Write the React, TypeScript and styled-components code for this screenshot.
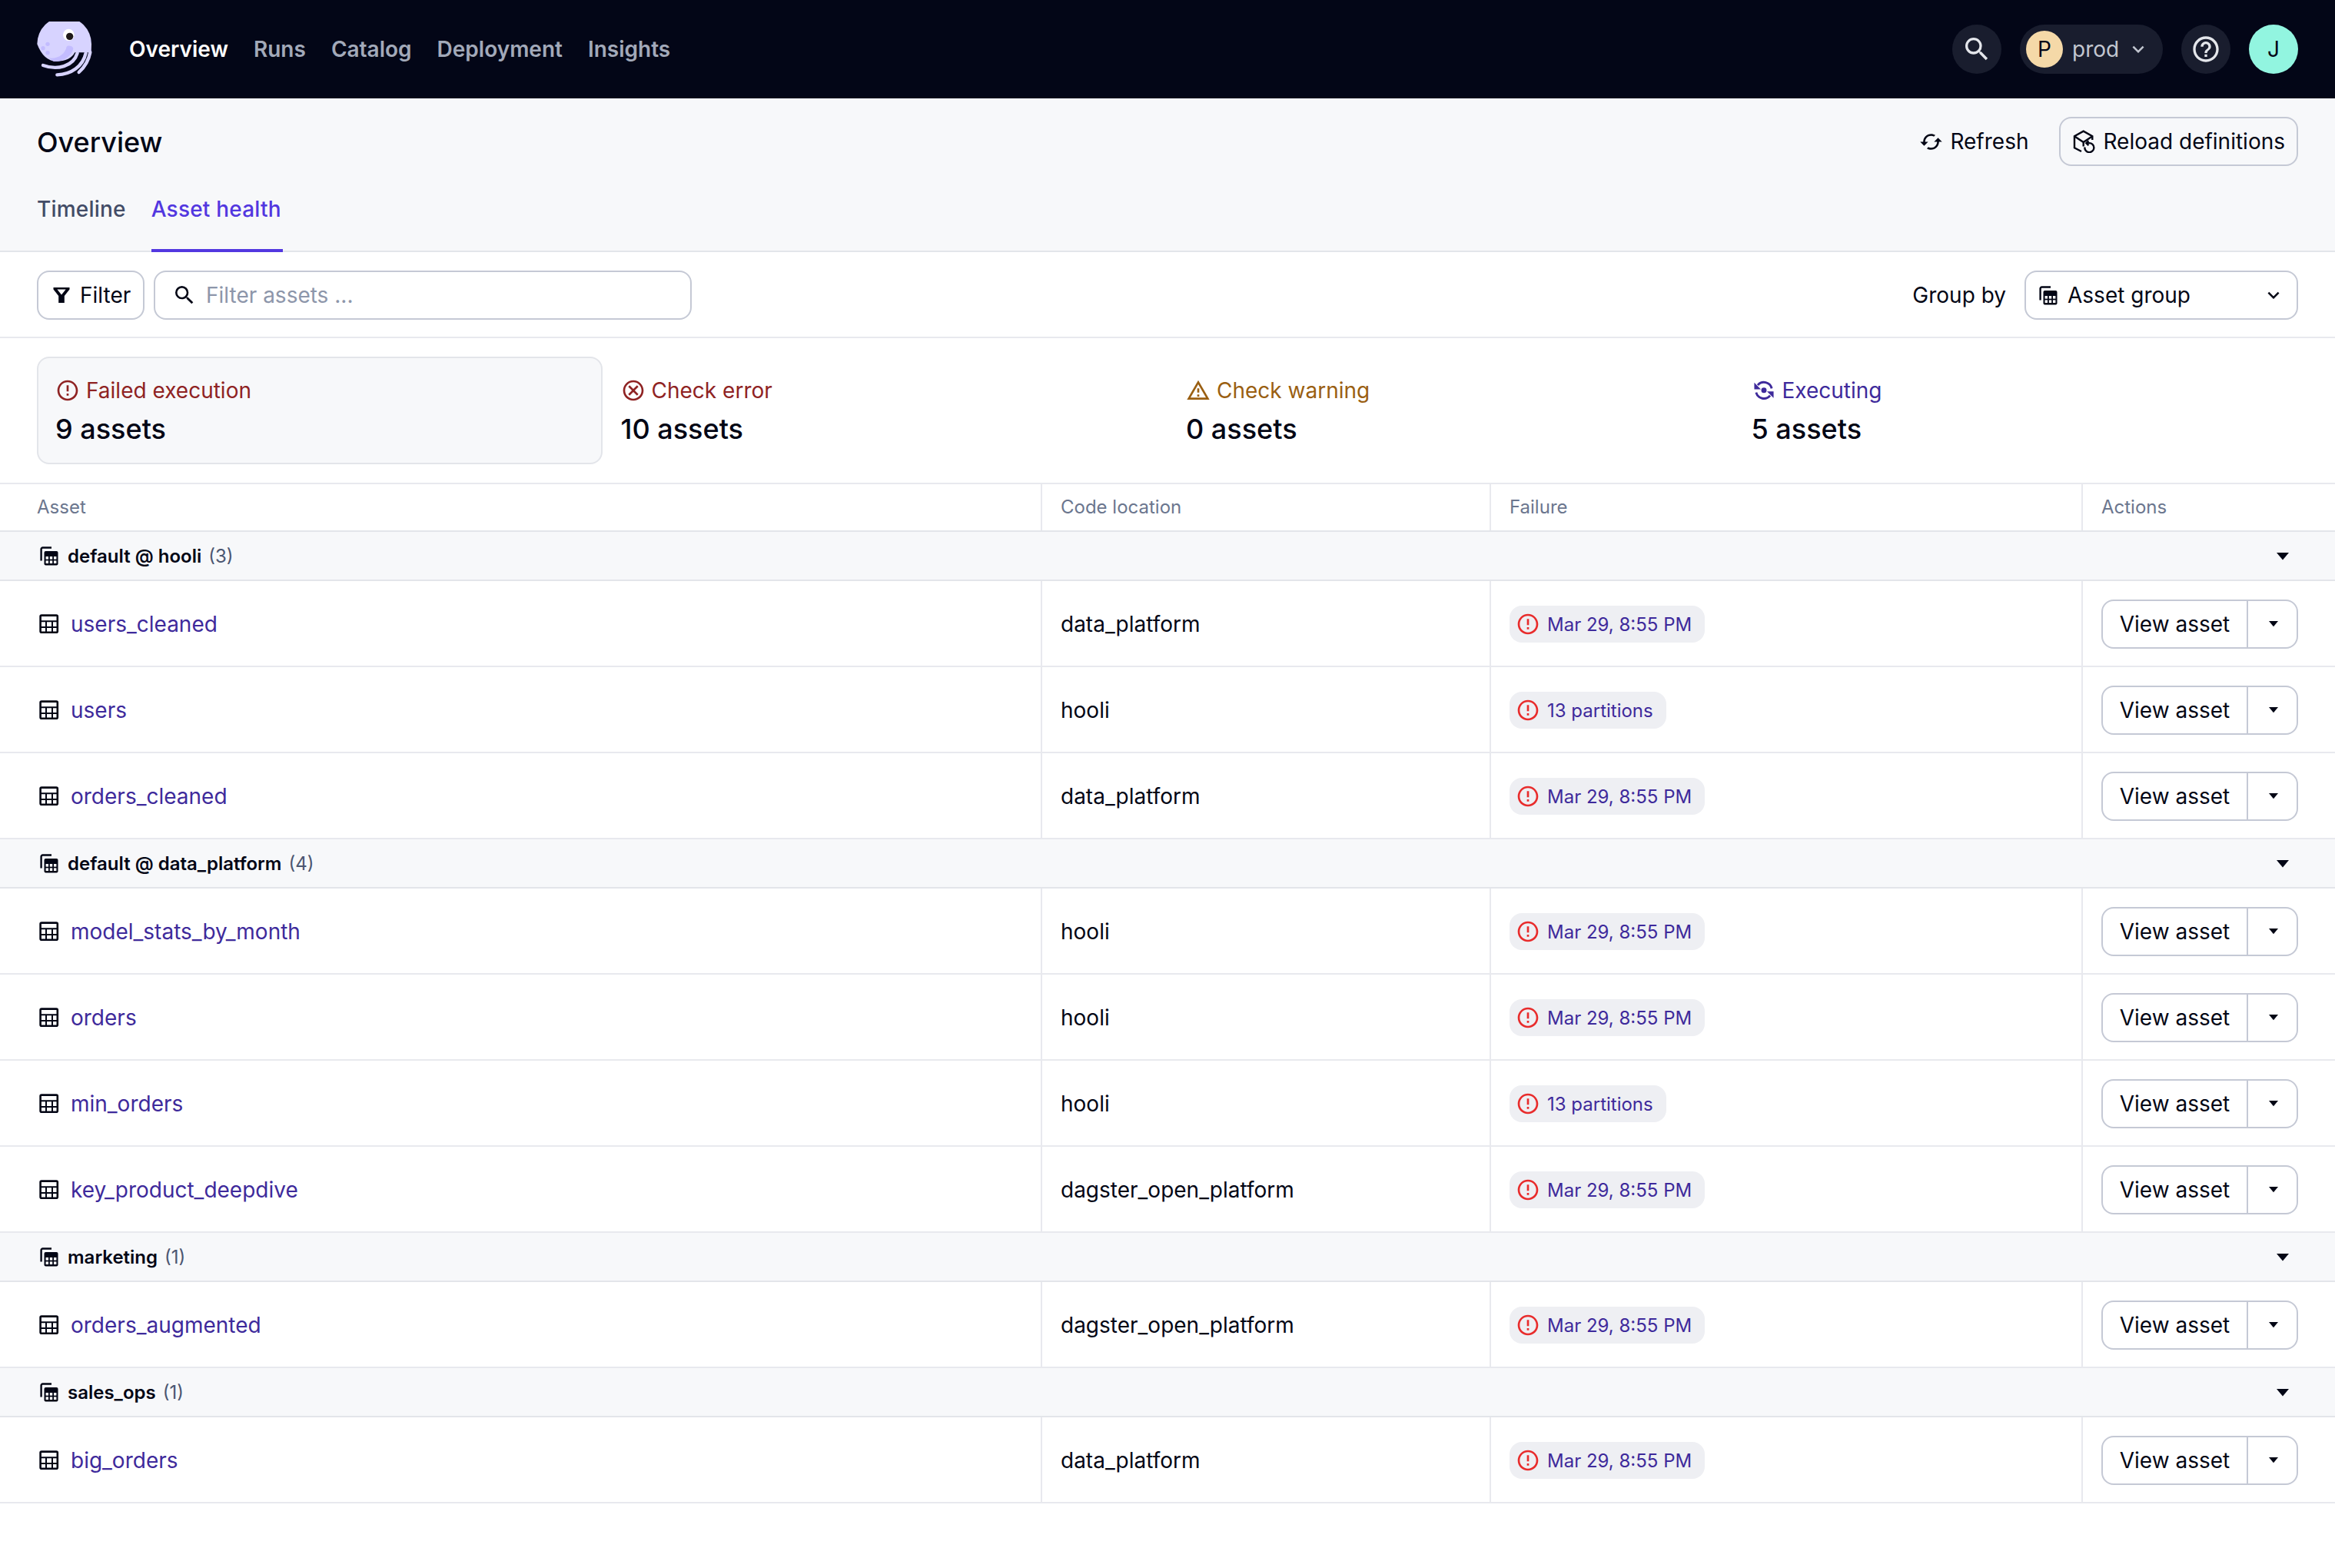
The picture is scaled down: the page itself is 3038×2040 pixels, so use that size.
import { ReactNode } from 'react'
import styled, { createGlobalStyle } from 'styled-components'

const GlobalStyle = createGlobalStyle`
  html, body {
    margin: 0;
    padding: 0;
    background: #fff;
    font-family: Inter, "Liberation Sans", sans-serif;
    color: #030615;
  }
  * {
    box-sizing: border-box;
  }
`

const Page = styled.div`
  width: 3038px;
  min-height: 2040px;
  background: #fff;
`

const TopNav = styled.header`
  height: 128px;
  background: #030617;
  display: flex;
  align-items: center;
  padding: 0 48px;
`
const NavLinks = styled.nav`
  display: flex;
  gap: 33px;
  margin-left: 48px;
`
const NavLink = styled.a<{ $active?: boolean }>`
  font-size: 28px;
  font-weight: 600;
  line-height: 40px;
  color: ${(p) => (p.$active ? '#fff' : '#a2a9b9')};
`
const NavRight = styled.div`
  margin-left: auto;
  display: flex;
  align-items: center;
  gap: 24px;
`
const RoundButton = styled.div`
  width: 64px;
  height: 64px;
  border-radius: 50%;
  background: #191d2e;
  color: #e4e6eb;
  display: flex;
  align-items: center;
  justify-content: center;
`
const DeploymentPill = styled.div`
  width: 186px;
  height: 64px;
  border-radius: 32px;
  background: #191d2e;
  display: flex;
  align-items: center;
  padding-left: 8px;
  color: #c2c6d0;
  font-size: 28px;
`
const PillLetter = styled.span`
  width: 48px;
  height: 48px;
  border-radius: 50%;
  background: #f5d9a8;
  color: #030617;
  display: flex;
  align-items: center;
  justify-content: center;
  margin-right: 12px;
`
const PillChevron = styled.span`
  display: flex;
  margin-left: 10px;
`
const Avatar = styled(RoundButton)`
  background: #92f5e0;
  color: #030617;
  font-size: 28px;
`

const PageHeader = styled.section`
  height: 200px;
  background: #f7f8fa;
  border-bottom: 2px solid #e3e5ea;
  padding: 24px 48px 0;
`
const TitleRow = styled.div`
  display: flex;
  align-items: center;
  justify-content: space-between;
  height: 64px;
`
const Title = styled.h1`
  margin: 0;
  padding-top: 2px;
  font-size: 36px;
  font-weight: 500;
`
const TitleActions = styled.div`
  display: flex;
  align-items: center;
  gap: 40px;
`
const RefreshLink = styled.div`
  display: flex;
  align-items: center;
  gap: 9px;
  font-size: 28px;
`
const OutlineButton = styled.div`
  height: 64px;
  border: 2px solid #c5c9d5;
  border-radius: 16px;
  display: flex;
  align-items: center;
  gap: 10px;
  font-size: 28px;
  padding: 0 15px;
`
const Tabs = styled.div`
  display: flex;
  gap: 31px;
`
const Tab = styled.div<{ $active?: boolean }>`
  height: 112px;
  padding: 4px 2px 0 0;
  display: flex;
  align-items: center;
  font-size: 28px;
  font-weight: 500;
  letter-spacing: 0.2px;
  color: ${(p) => (p.$active ? '#5237e0' : '#434c66')};
  border-bottom: 4px solid ${(p) => (p.$active ? '#5237e0' : 'transparent')};
`

const FilterBar = styled.section`
  height: 112px;
  border-bottom: 2px solid #e8e9ee;
  padding: 24px 48px 0;
  display: flex;
  align-items: flex-start;
  gap: 12px;
`
const FilterButton = styled(OutlineButton)`
  width: 140px;
  padding: 0 0 0 18px;
  gap: 12px;
  background: #fff;
`
const SearchBox = styled.div`
  width: 700px;
  height: 64px;
  border: 2px solid #c5c9d5;
  border-radius: 16px;
  display: flex;
  align-items: center;
  gap: 12px;
  padding-left: 22px;
  font-size: 28px;
  color: #8d96aa;
`
const GroupBy = styled.div`
  margin-left: auto;
  height: 64px;
  display: flex;
  align-items: center;
  gap: 24px;
  font-size: 28px;
`
const GroupSelect = styled(OutlineButton)`
  width: 356px;
  gap: 13px;
  padding: 0 15px 0 15px;
`
const SelectChevron = styled.span`
  margin-left: auto;
  display: flex;
`

const Summary = styled.section`
  height: 190px;
  border-bottom: 2px solid #e8e9ee;
  padding: 24px 48px;
  display: grid;
  grid-template-columns: repeat(4, 1fr);
`
const SummaryCard = styled.div<{ $selected?: boolean }>`
  height: 140px;
  border: 2px solid ${(p) => (p.$selected ? '#e3e5ea' : 'transparent')};
  border-radius: 16px;
  background: ${(p) => (p.$selected ? '#f7f8fa' : 'transparent')};
  padding: 22px 22px;
`
const SummaryLabel = styled.div<{ $color: string }>`
  display: flex;
  align-items: center;
  gap: 8px;
  color: ${(p) => p.$color};
  font-size: 28px;
  line-height: 40px;
`
const SummaryCount = styled.div`
  font-size: 36px;
  font-weight: 500;
  line-height: 48px;
  margin-top: 6px;
`

const COLUMNS = '1354px 584px 770px 330px'

const TableHead = styled.div`
  display: grid;
  grid-template-columns: ${COLUMNS};
  height: 62px;
  border-bottom: 2px solid #e3e5ea;
`
const HeadCell = styled.div`
  display: flex;
  align-items: center;
  padding: 0 0 2px 24px;
  font-size: 24px;
  color: #6b768e;
  border-left: 2px solid #e8e9ee;
  &:first-child {
    border-left: none;
    padding-left: 48px;
  }
`
const GroupRow = styled.div`
  height: 64px;
  background: #f7f8fa;
  border-bottom: 2px solid #e3e5ea;
  display: flex;
  align-items: center;
  padding: 0 60px 0 50px;
`
const GroupName = styled.span`
  margin-left: 12px;
  font-size: 24px;
  font-weight: 600;
`
const GroupCount = styled.span`
  margin-left: 9px;
  font-size: 24px;
  color: #4b5671;
`
const GroupCaret = styled.span`
  margin: 2px 0 0 auto;
  display: flex;
`
const AssetRow = styled.div`
  display: grid;
  grid-template-columns: ${COLUMNS};
  height: 112px;
  border-bottom: 2px solid #e8e9ee;
`
const Cell = styled.div`
  display: flex;
  align-items: center;
  padding: 2px 0 0 24px;
  border-left: 2px solid #e8e9ee;
  font-size: 28px;
  &:first-child {
    border-left: none;
    padding-left: 51px;
  }
`
const AssetName = styled.a`
  margin-left: 15px;
  color: #3e2a9b;
  font-size: 28px;
`
const FailureTag = styled.div`
  height: 48px;
  border-radius: 16px;
  background: #eeeff3;
  display: flex;
  align-items: center;
  gap: 9px;
  padding: 0 17px 0 8px;
  font-size: 24px;
  color: #3e2a9b;
`
const SplitButton = styled.div`
  width: 256px;
  height: 64px;
  border: 2px solid #c5c9d5;
  border-radius: 16px;
  display: flex;
  align-items: center;
  font-size: 28px;
`
const SplitLabel = styled.div`
  width: 189px;
  height: 100%;
  display: flex;
  align-items: center;
  justify-content: center;
  border-right: 2px solid #c5c9d5;
`
const SplitCaret = styled.div`
  flex: 1;
  display: flex;
  justify-content: center;
  padding-left: 2px;
`

const Icon = ({ size = 32, color = 'currentColor', children }: { size?: number; color?: string; children: ReactNode }) => (
  <svg width={size} height={size} viewBox="0 0 24 24" fill={color} style={{ flex: 'none' }}>
    {children}
  </svg>
)

const SEARCH =
  'M15.5 14h-.79l-.28-.27A6.47 6.47 0 0 0 16 9.5 6.5 6.5 0 1 0 9.5 16c1.61 0 3.09-.59 4.23-1.57l.27.28v.79l5 4.99L20.49 19l-4.99-5zm-6 0C7.01 14 5 11.99 5 9.5S7.01 5 9.5 5 14 7.01 14 9.5 11.99 14 9.5 14z'
const HELP =
  'M11 18h2v-2h-2v2zm1-16C6.48 2 2 6.48 2 12s4.48 10 10 10 10-4.48 10-10S17.52 2 12 2zm0 18c-4.41 0-8-3.59-8-8s3.59-8 8-8 8 3.59 8 8-3.59 8-8 8zm0-14c-2.21 0-4 1.79-4 4h2c0-1.1.9-2 2-2s2 .9 2 2c0 2-3 1.75-3 5h2c0-2.25 3-2.5 3-5 0-2.21-1.79-4-4-4z'
const CHEVRON = 'M16.59 8.59L12 13.17 7.41 8.59 6 10l6 6 6-6z'
const CACHED =
  'M19 8l-4 4h3c0 3.31-2.69 6-6 6-1.01 0-1.97-.25-2.8-.7l-1.46 1.46C8.97 19.54 10.43 20 12 20c4.42 0 8-3.58 8-8h3l-4-4zM6 12c0-3.31 2.69-6 6-6 1.01 0 1.97.25 2.8.7l1.46-1.46C15.03 4.46 13.57 4 12 4c-4.42 0-8 3.58-8 8H1l4 4 4-4H6z'
const ERROR =
  'M11 15h2v2h-2zm0-8h2v6h-2zm.99-5C6.47 2 2 6.48 2 12s4.47 10 9.99 10C17.52 22 22 17.52 22 12S17.52 2 11.99 2zM12 20c-4.42 0-8-3.58-8-8s3.58-8 8-8 8 3.58 8 8-3.58 8-8 8z'
const CANCEL =
  'M12 2C6.47 2 2 6.47 2 12s4.47 10 10 10 10-4.47 10-10S17.53 2 12 2zm0 18c-4.41 0-8-3.59-8-8s3.59-8 8-8 8 3.59 8 8-3.59 8-8 8zm3.59-13L12 10.59 8.41 7 7 8.41 10.59 12 7 15.59 8.41 17 12 13.41 15.59 17 17 15.59 13.41 12 17 8.41z'
const WARNING =
  'M12 5.99L19.53 19H4.47L12 5.99M12 2L1 21h22L12 2zm1 14h-2v2h2v-2zm0-6h-2v4h2v-4z'

const Path = ({ d, ...rest }: { d: string; size?: number; color?: string }) => (
  <Icon {...rest}>
    <path d={d} />
  </Icon>
)

const ExecutingIcon = () => (
  <Icon>
    <circle cx="12" cy="11.8" r="2.6" />
    <path d="M2.6 4.4v6.4H9z" />
    <path d="M21.4 19.4v-6.4H15z" />
    <g fill="none" stroke="currentColor" strokeWidth="2.2">
      <path d="M19.6 10A7.8 7.8 0 0 0 6 6.8" />
      <path d="M4.4 14A7.8 7.8 0 0 0 18 17" />
    </g>
  </Icon>
)

const TableIcon = () => (
  <svg width="26" height="26" viewBox="0 0 26 26" fill="none" stroke="#030615" style={{ flex: 'none' }}>
    <rect x="1.6" y="1.6" width="22.2" height="22.2" rx="1.5" strokeWidth="2.6" />
    <path d="M1 9.3h24M1 17h24M9 9.3V25M17 9.3V25" strokeWidth="2" />
  </svg>
)

const GroupIcon = () => (
  <svg width="26" height="26" viewBox="0 0 26 26" style={{ flex: 'none' }}>
    <path d="M3.6 19.5V4.5a2 2 0 0 1 2-2H17" fill="none" stroke="#030615" strokeWidth="2.4" />
    <rect x="7.5" y="7" width="18" height="18.4" rx="2" fill="#030615" />
    <g fill="#fff">
      <rect x="9.6" y="14" width="3.4" height="3.6" />
      <rect x="14.8" y="14" width="3.4" height="3.6" />
      <rect x="20" y="14" width="3.4" height="3.6" />
      <rect x="9.6" y="19.4" width="3.4" height="3.6" />
      <rect x="14.8" y="19.4" width="3.4" height="3.6" />
      <rect x="20" y="19.4" width="3.4" height="3.6" />
    </g>
  </svg>
)

const FunnelIcon = () => (
  <svg width="24" height="24" viewBox="0 0 24 24" style={{ flex: 'none' }}>
    <path d="M1.5 2h21v2.4L15.8 13v9H8.2v-9L1.5 4.4z" fill="#030615" />
    <path d="M6.4 4.6h11.2L12 11.6z" fill="#fff" />
  </svg>
)

const ReloadIcon = () => (
  <svg width="30" height="30" viewBox="0 0 30 30" fill="none" stroke="#030615" strokeWidth="2.4" style={{ flex: 'none' }}>
    <path d="M12 28 3 23.2V8.3l11.7-6.6 11.6 6.6V13" />
    <path d="M3 8.3 14.7 16l11.6-7.7M14.7 16v5.5" />
    <path d="M16.4 22.5a6 6 0 1 0 5.8-5.4h-3" />
    <path d="M21.4 14.2l-3 3 3 3" />
  </svg>
)

const Caret = ({ width }: { width: number }) => (
  <svg width={width} height={width * 0.6} viewBox="0 0 10 6" style={{ flex: 'none' }}>
    <path d="M0 0h10L5 6z" fill="#030615" />
  </svg>
)

const Logo = () => (
  <svg width="72" height="72" viewBox="84 84 216 216" style={{ flex: 'none' }}>
    <path d="M85 172A106 106 0 0 1 297 172L296 205H232Q215 238 160 240Q110 238 85 172Z" fill="#d7d3ff" />
    <path d="M130 226C165 232 195 210 200 182 205 175 222 178 226 188 222 215 190 242 150 240Z" fill="#c3bcff" />
    <circle cx="126" cy="172" r="8" fill="#c3bcff" />
    <circle cx="108" cy="188" r="8" fill="#c3bcff" />
    <circle cx="126" cy="206" r="8" fill="#c3bcff" />
    <ellipse cx="208" cy="136" rx="22" ry="23" fill="#fff" />
    <circle cx="212" cy="142" r="14" fill="#1f1a1a" />
    <g fill="none" stroke="#d7d3ff" strokeWidth="13" strokeLinecap="round">
      <path d="M108 255c55 20 118 5 134-48" />
      <path d="M163 292c55-2 100-32 112-85" />
      <path d="M248 282c22-20 38-45 44-78" />
    </g>
  </svg>
)

interface IAsset {
  name: string
  location: string
  failure: string
}
interface IGroup {
  name: string
  assets: IAsset[]
}

const MAR = 'Mar 29, 8:55 PM'
const PARTS = '13 partitions'

const groups: IGroup[] = [
  {
    name: 'default @ hooli',
    assets: [
      { name: 'users_cleaned', location: 'data_platform', failure: MAR },
      { name: 'users', location: 'hooli', failure: PARTS },
      { name: 'orders_cleaned', location: 'data_platform', failure: MAR },
    ],
  },
  {
    name: 'default @ data_platform',
    assets: [
      { name: 'model_stats_by_month', location: 'hooli', failure: MAR },
      { name: 'orders', location: 'hooli', failure: MAR },
      { name: 'min_orders', location: 'hooli', failure: PARTS },
      { name: 'key_product_deepdive', location: 'dagster_open_platform', failure: MAR },
    ],
  },
  {
    name: 'marketing',
    assets: [{ name: 'orders_augmented', location: 'dagster_open_platform', failure: MAR }],
  },
  {
    name: 'sales_ops',
    assets: [{ name: 'big_orders', location: 'data_platform', failure: MAR }],
  },
]

const summaries = [
  { label: 'Failed execution', count: '9 assets', color: '#8f2323', icon: <Path d={ERROR} />, selected: true },
  { label: 'Check error', count: '10 assets', color: '#8f2323', icon: <Path d={CANCEL} /> },
  { label: 'Check warning', count: '0 assets', color: '#9a5f12', icon: <Path d={WARNING} /> },
  { label: 'Executing', count: '5 assets', color: '#3e2a9b', icon: <ExecutingIcon /> },
]

export default function App() {
  return (
    <Page>
      <GlobalStyle />
      <TopNav>
        <Logo />
        <NavLinks>
          <NavLink $active>Overview</NavLink>
          <NavLink>Runs</NavLink>
          <NavLink>Catalog</NavLink>
          <NavLink>Deployment</NavLink>
          <NavLink>Insights</NavLink>
        </NavLinks>
        <NavRight>
          <RoundButton>
            <Path d={SEARCH} size={40} />
          </RoundButton>
          <DeploymentPill>
            <PillLetter>P</PillLetter>
            prod
            <PillChevron>
              <Path d={CHEVRON} size={30} />
            </PillChevron>
          </DeploymentPill>
          <RoundButton>
            <Path d={HELP} size={40} />
          </RoundButton>
          <Avatar>J</Avatar>
        </NavRight>
      </TopNav>

      <PageHeader>
        <TitleRow>
          <Title>Overview</Title>
          <TitleActions>
            <RefreshLink>
              <Path d={CACHED} size={31} />
              Refresh
            </RefreshLink>
            <OutlineButton>
              <ReloadIcon />
              Reload definitions
            </OutlineButton>
          </TitleActions>
        </TitleRow>
        <Tabs>
          <Tab>Timeline</Tab>
          <Tab $active>Asset health</Tab>
        </Tabs>
      </PageHeader>

      <FilterBar>
        <FilterButton>
          <FunnelIcon />
          Filter
        </FilterButton>
        <SearchBox>
          <Path d={SEARCH} size={32} color="#030615" />
          Filter assets ...
        </SearchBox>
        <GroupBy>
          Group by
          <GroupSelect>
            <GroupIcon />
            Asset group
            <SelectChevron>
              <Path d={CHEVRON} size={30} color="#030615" />
            </SelectChevron>
          </GroupSelect>
        </GroupBy>
      </FilterBar>

      <Summary>
        {summaries.map((s) => (
          <SummaryCard key={s.label} $selected={s.selected}>
            <SummaryLabel $color={s.color}>
              {s.icon}
              {s.label}
            </SummaryLabel>
            <SummaryCount>{s.count}</SummaryCount>
          </SummaryCard>
        ))}
      </Summary>

      <TableHead>
        <HeadCell>Asset</HeadCell>
        <HeadCell>Code location</HeadCell>
        <HeadCell>Failure</HeadCell>
        <HeadCell>Actions</HeadCell>
      </TableHead>

      {groups.map((group) => (
        <div key={group.name}>
          <GroupRow>
            <GroupIcon />
            <GroupName>{group.name}</GroupName>
            <GroupCount>({group.assets.length})</GroupCount>
            <GroupCaret>
              <Caret width={16} />
            </GroupCaret>
          </GroupRow>
          {group.assets.map((asset) => (
            <AssetRow key={asset.name}>
              <Cell>
                <TableIcon />
                <AssetName>{asset.name}</AssetName>
              </Cell>
              <Cell>{asset.location}</Cell>
              <Cell>
                <FailureTag>
                  <Path d={ERROR} size={32} color="#e82c2c" />
                  {asset.failure}
                </FailureTag>
              </Cell>
              <Cell>
                <SplitButton>
                  <SplitLabel>View asset</SplitLabel>
                  <SplitCaret>
                    <Caret width={12} />
                  </SplitCaret>
                </SplitButton>
              </Cell>
            </AssetRow>
          ))}
        </div>
      ))}
    </Page>
  )
}
